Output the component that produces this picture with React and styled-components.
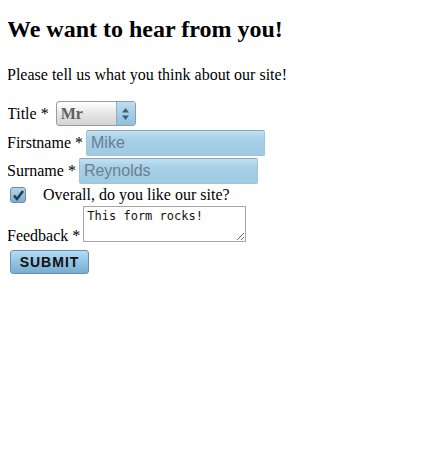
import React from 'react'
import styled, { createGlobalStyle } from 'styled-components'

const GlobalStyle = createGlobalStyle`
  body {
    margin: 8px;
    background: #ffffff;
    color: #000000;
    font-family: "Liberation Serif", "Times New Roman", serif;
    font-size: 16px;
  }
`

const Heading = styled.h2`
  font-size: 24px;
  font-weight: bold;
  margin: 7px 0 0 -1px;
  line-height: 28px;
`

const Intro = styled.p`
  margin: 23px 0 17px -1px;
  line-height: 18px;
`

const Form = styled.form`
  display: flex;
  flex-direction: column;
  align-items: flex-start;
  gap: 3px;
`

const Row = styled.div`
  display: flex;
  align-items: ${p => p.$align || 'center'};
  gap: ${p => p.$gap || 3}px;
  margin-top: ${p => p.$top || 0}px;
`

const Label = styled.label`
  line-height: 18px;
  margin-left: -1px;
  margin-bottom: ${p => p.$drop ? -3 : 0}px;
`

const SelectBox = styled.div`
  display: flex;
  width: 80px;
  height: 25px;
  box-sizing: border-box;
  border: 1px solid #8f9fae;
  border-radius: 3px;
  overflow: hidden;
  background: linear-gradient(#ffffff, #e2e2e2 60%, #d4d4d4);
`

const Select = styled.select`
  appearance: none;
  flex: 1;
  border: none;
  background: transparent;
  font-family: "Liberation Serif", serif;
  font-weight: bold;
  font-size: 16px;
  color: #5e5e5e;
  padding: 0 0 0 4px;
  outline: none;
`

const Arrows = styled.span`
  width: 18px;
  display: flex;
  align-items: center;
  justify-content: center;
  border-left: 1px solid #8fb0c8;
  background: linear-gradient(#bcdcf0, #8fc0de);
`

const TextInput = styled.input`
  width: 179px;
  height: 26px;
  box-sizing: border-box;
  border: 1px solid #a4c2d6;
  border-top-color: #8aa6b9;
  border-radius: 2px;
  background: linear-gradient(#c3e1f3, #a9d1e8 30%, #9ecae3);
  font-family: "Liberation Sans", Arial, sans-serif;
  font-size: 16px;
  color: #6b7f8e;
  padding: 0 4px;
  outline: none;
`

const CheckBox = styled.span`
  width: 16px;
  height: 16px;
  box-sizing: border-box;
  margin-left: 2px;
  border: 1px solid #6e8ea6;
  border-radius: 3px;
  background: linear-gradient(#b3d4ea, #7eaed0);
  display: flex;
  align-items: center;
  justify-content: center;
`

const CheckText = styled.span`
  line-height: 18px;
  margin-left: 14px;
`

const TextArea = styled.textarea`
  width: 163px;
  height: 36px;
  box-sizing: border-box;
  border: 1px solid #a6a6a6;
  font-family: "DejaVu Sans Mono", "Liberation Mono", monospace;
  font-size: 12px;
  padding: 2px 3px;
  margin: 0;
  color: #111;
  outline: none;
`

const Submit = styled.button`
  margin: 5px 0 0 2px;
  width: 79px;
  height: 24px;
  box-sizing: border-box;
  border: 1px solid #6791b0;
  border-radius: 3px;
  background: linear-gradient(#b5dcf2, #92c4e2 50%, #78aed2);
  font-family: "Liberation Sans", Arial, sans-serif;
  font-weight: bold;
  font-size: 14px;
  letter-spacing: 1px;
  color: #111;
  padding: 0;
`

export default function App() {
  return (
    <>
      <GlobalStyle />
      <Heading>We want to hear from you!</Heading>
      <Intro>Please tell us what you think about our site!</Intro>
      <Form onSubmit={e => e.preventDefault()}>
        <Row $gap={7}>
          <Label>Title *</Label>
          <SelectBox>
            <Select defaultValue="Mr">
              <option>Mr</option>
              <option>Mrs</option>
              <option>Ms</option>
            </Select>
            <Arrows>
              <svg width="9" height="14" viewBox="0 0 9 14">
                <path d="M4.5 1 L8 5.5 L1 5.5 Z M4.5 13 L8 8.5 L1 8.5 Z" fill="#3c5f7a" />
              </svg>
            </Arrows>
          </SelectBox>
        </Row>
        <Row $top={1}>
          <Label>Firstname *</Label>
          <TextInput defaultValue="Mike" />
        </Row>
        <Row $top={-1}>
          <Label>Surname *</Label>
          <TextInput defaultValue="Reynolds" />
        </Row>
        <Row $top={-1}>
          <CheckBox>
            <svg width="13" height="13" viewBox="0 0 13 13">
              <path d="M2 6.5 L5 10 L11 2" stroke="#1f3f5a" strokeWidth="2.6" fill="none" />
            </svg>
          </CheckBox>
          <CheckText>Overall, do you like our site?</CheckText>
        </Row>
        <Row $align="flex-end" $top={-1}>
          <Label $drop>Feedback *</Label>
          <TextArea defaultValue="This form rocks!" />
        </Row>
        <Submit type="submit">SUBMIT</Submit>
      </Form>
    </>
  )
}
